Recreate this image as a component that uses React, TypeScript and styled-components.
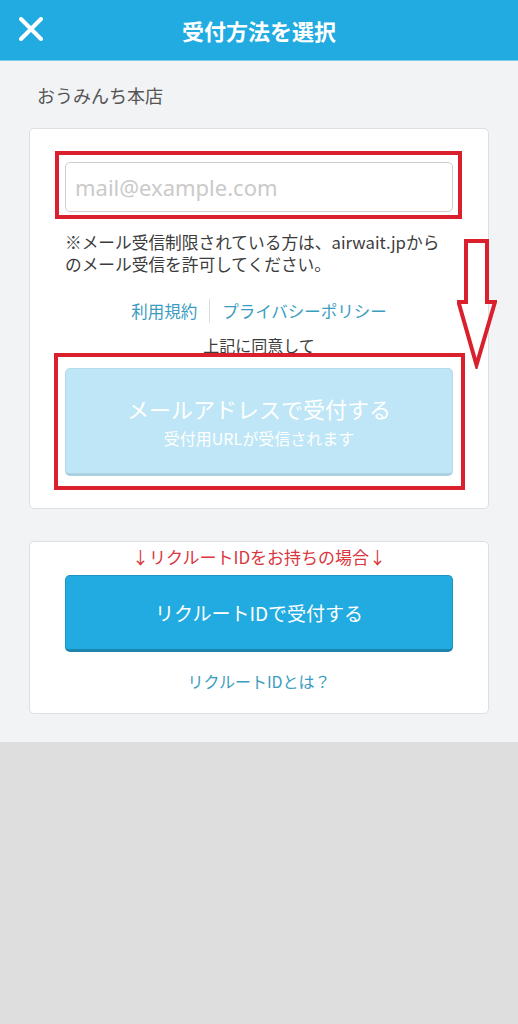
import React from 'react';
import styled, { createGlobalStyle } from 'styled-components';

const GlobalStyle = createGlobalStyle`
  html, body {
    margin: 0;
    padding: 0;
    background: #dedede;
  }
  body {
    font-family: "Noto Sans CJK JP", "Noto Sans", sans-serif;
    -webkit-font-smoothing: antialiased;
  }
  * {
    box-sizing: border-box;
  }
`;

const Page = styled.div`
  width: 518px;
  min-height: 1024px;
  background: #dedede;
`;

const Header = styled.header`
  height: 61px;
  background: #22abe0;
  border-bottom: 1px solid #7ccdec;
  display: flex;
  align-items: center;
  justify-content: center;
  position: relative;
`;

const CloseButton = styled.button`
  position: absolute;
  left: 17px;
  top: 15px;
  width: 28px;
  height: 28px;
  padding: 0;
  border: 0;
  background: transparent;
  display: flex;
  align-items: center;
  justify-content: center;
`;

const Title = styled.h1`
  margin: 0;
  color: #fff;
  font-size: 22px;
  font-weight: 700;
  line-height: 30px;
`;

const Main = styled.main`
  background: #f2f3f5;
  padding: 22px 29px 28px;
`;

const StoreName = styled.div`
  font-size: 18px;
  line-height: 24px;
  color: #555;
  padding-left: 8px;
  margin-bottom: 21px;
`;

const Card = styled.section<{ $pad: string }>`
  position: relative;
  background: #fff;
  border: 1px solid #dcdfe3;
  border-radius: 5px;
  padding: ${(p) => p.$pad};
  & + & {
    margin-top: 32px;
  }
`;

const Marked = styled.div<{ $inset: string }>`
  position: relative;
  &::after {
    content: '';
    position: absolute;
    inset: ${(p) => p.$inset};
    border: 4px solid #d9202c;
    pointer-events: none;
  }
`;

const EmailInput = styled.input`
  display: block;
  width: 100%;
  height: 50px;
  border: 1.5px solid #cfcfcf;
  border-radius: 5px;
  padding: 0 9px;
  font-family: "Noto Sans", "Noto Sans CJK JP", sans-serif;
  font-size: 22px;
  color: #333;
  background: #fff;
  &::placeholder {
    color: #cacaca;
  }
`;

const Note = styled.p`
  margin: 19px 0 0;
  font-size: 16.7px;
  line-height: 22px;
  color: #3c3c3c;
`;

const LinkRow = styled.div`
  margin-top: 24px;
  display: flex;
  justify-content: center;
  align-items: center;
`;

const TextLink = styled.a<{ $size?: number }>`
  color: #3a9cc0;
  font-size: ${(p) => p.$size ?? 16}px;
  line-height: 22px;
  text-decoration: none;
`;

const Divider = styled.span`
  width: 1px;
  height: 24px;
  background: #dcdcdc;
  margin: 0 12px;
`;

const Agree = styled.div`
  margin-top: 11px;
  text-align: center;
  font-size: 16px;
  line-height: 22px;
  color: #3c3c3c;
`;

const ActionButton = styled.button<{ $disabled?: boolean }>`
  display: flex;
  flex-direction: column;
  align-items: center;
  justify-content: center;
  width: 100%;
  border-radius: 5px;
  color: #fff;
  font-family: "Noto Sans CJK JP", "Noto Sans", sans-serif;
  background: ${(p) => (p.$disabled ? '#bee6f6' : '#22abe0')};
  border: 1px solid ${(p) => (p.$disabled ? '#b4dcec' : '#1c95c5')};
  border-bottom: 3px solid ${(p) => (p.$disabled ? '#a9d1e0' : '#1a84ad')};
`;

const ButtonMain = styled.span<{ $size: number }>`
  font-size: ${(p) => p.$size}px;
  line-height: 30px;
`;

const ButtonSub = styled.span`
  font-size: 16px;
  line-height: 22px;
  margin-top: 4px;
`;

const Notice = styled.div`
  text-align: center;
  color: #d9363e;
  font-size: 17px;
  line-height: 24px;
  margin-bottom: 6px;
`;

const Center = styled.div`
  margin-top: 17px;
  text-align: center;
`;

const ArrowMark = styled.svg`
  position: absolute;
  right: -9px;
  top: 110px;
`;

const CloseIcon = () => (
  <svg width="24" height="24" viewBox="0 0 24 24">
    <path d="M2 2 L22 22 M22 2 L2 22" stroke="#fff" strokeWidth="4" strokeLinecap="round" />
  </svg>
);

const App: React.FC = () => {
  return (
    <Page>
      <GlobalStyle />
      <Header>
        <CloseButton aria-label="閉じる">
          <CloseIcon />
        </CloseButton>
        <Title>受付方法を選択</Title>
      </Header>
      <Main>
        <StoreName>おうみんち本店</StoreName>

        <Card $pad="33px 35px 32px">
          <Marked $inset="-11px -9px -7px -10px">
            <EmailInput type="email" placeholder="mail@example.com" />
          </Marked>
          <Note>
            ※メール受信制限されている方は、airwait.jpからのメール受信を許可してください。
          </Note>
          <LinkRow>
            <TextLink href="#" $size={16.5}>利用規約</TextLink>
            <Divider />
            <TextLink href="#" $size={16.5}>プライバシーポリシー</TextLink>
          </LinkRow>
          <Agree>上記に同意して</Agree>
          <Marked $inset="-15px -12px -14px -11px" style={{ marginTop: 12 }}>
            <ActionButton $disabled style={{ height: 108 }}>
              <ButtonMain $size={22}>メールアドレスで受付する</ButtonMain>
              <ButtonSub>受付用URLが受信されます</ButtonSub>
            </ActionButton>
          </Marked>
          <ArrowMark width="40" height="130" viewBox="0 0 40 130">
            <polygon
              points="9,2 30,2 30,63 38,63 19.5,126 1.5,63 9,63"
              fill="none"
              stroke="#d9202c"
              strokeWidth="4"
            />
          </ArrowMark>
        </Card>

        <Card $pad="3px 35px 20px">
          <Notice>↓リクルートIDをお持ちの場合↓</Notice>
          <ActionButton style={{ height: 77 }}>
            <ButtonMain $size={19}>リクルートIDで受付する</ButtonMain>
          </ActionButton>
          <Center>
            <TextLink href="#">リクルートIDとは？</TextLink>
          </Center>
        </Card>
      </Main>
    </Page>
  );
};

export default App;
